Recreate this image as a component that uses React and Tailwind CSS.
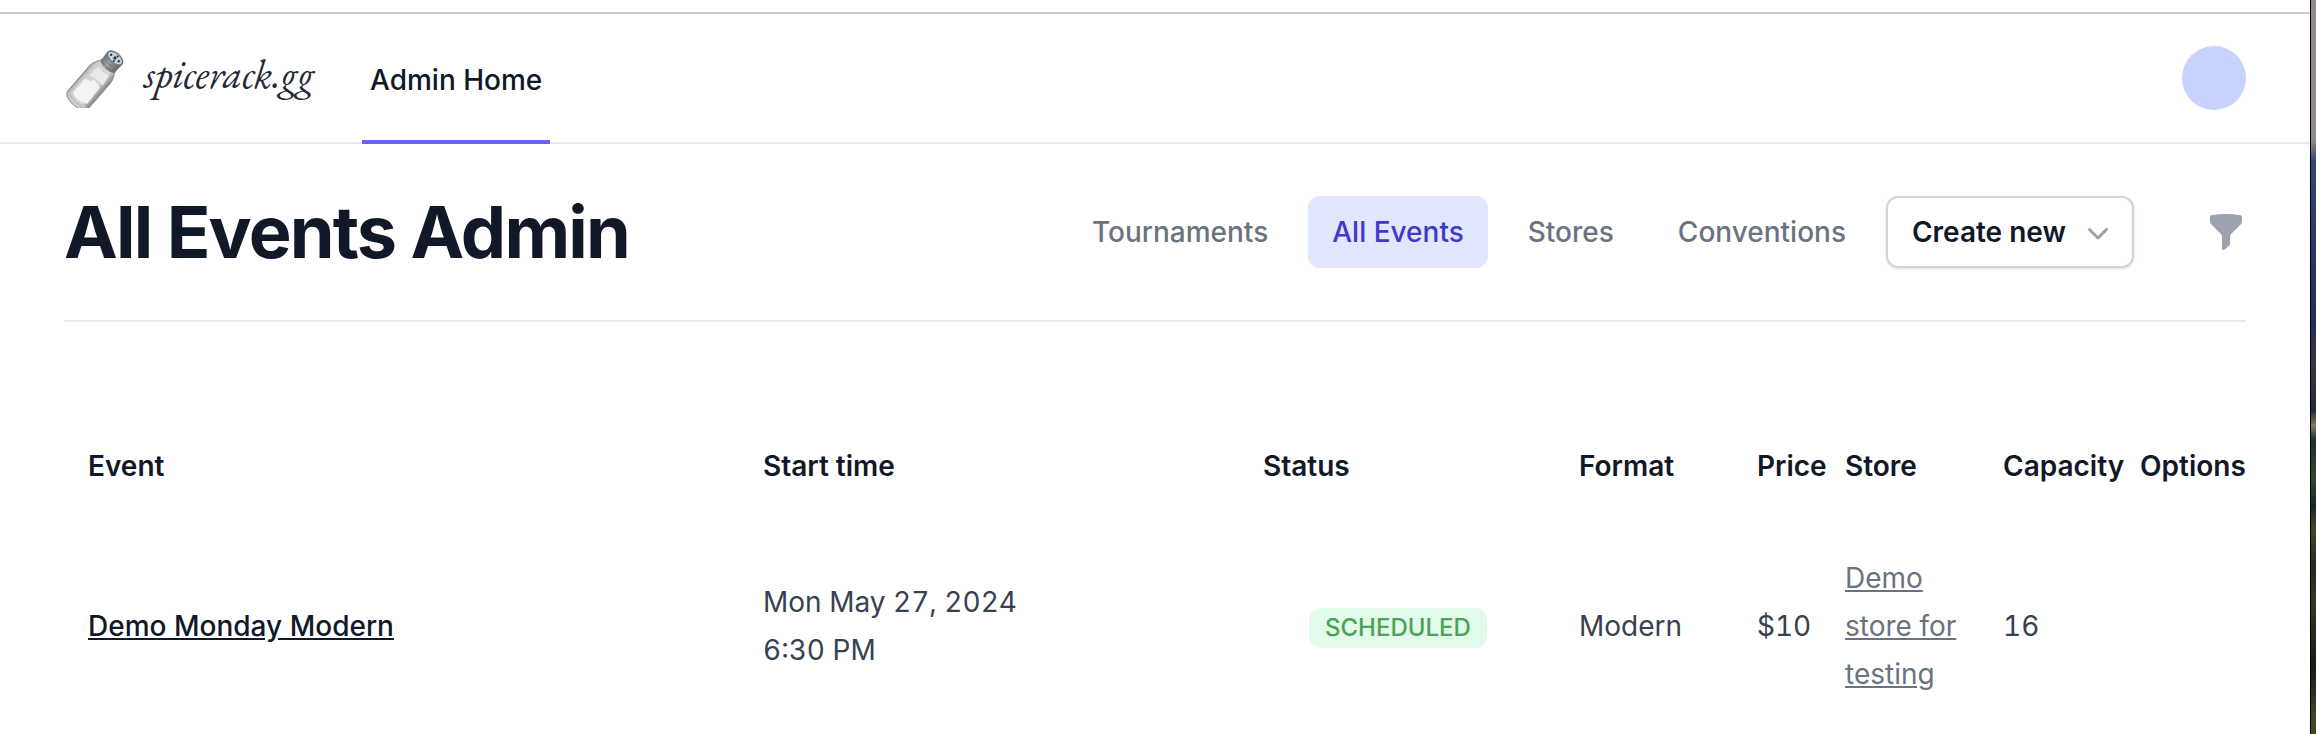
import React, { useState } from "react";
import { HiMiniChevronDown, HiMiniFunnel } from "react-icons/hi2";

const tabs = ["Tournaments", "All Events", "Stores", "Conventions"];

const columns = [
  { name: "Event", width: "" },
  { name: "Start time", width: "w-[500px]" },
  { name: "Status", width: "w-[316px]" },
  { name: "Format", width: "w-[178px]" },
  { name: "Price", width: "w-[88px]" },
  { name: "Store", width: "w-[158px]" },
  { name: "Capacity", width: "w-[137px]" },
  { name: "Options", width: "w-[106px]" },
];

const events = [
  {
    id: 1,
    name: "Demo Monday Modern",
    date: "Mon May 27, 2024",
    time: "6:30 PM",
    status: "SCHEDULED",
    format: "Modern",
    price: "$10",
    store: "Demo store for testing",
    capacity: 16,
  },
];

const SaltShaker = () => (
  <svg viewBox="0 0 60 60" className="size-[60px]" aria-hidden="true">
    <defs>
      <linearGradient id="glass" x1="0" y1="0" x2="1" y2="0">
        <stop offset="0" stopColor="#a9a8a4" />
        <stop offset="0.15" stopColor="#d0cfcd" />
        <stop offset="0.7" stopColor="#dadad9" />
        <stop offset="1" stopColor="#858583" />
      </linearGradient>
      <linearGradient id="metal" x1="0" y1="0" x2="1" y2="0">
        <stop offset="0" stopColor="#686b6e" />
        <stop offset="0.4" stopColor="#a3a6a9" />
        <stop offset="1" stopColor="#5d6062" />
      </linearGradient>
    </defs>
    <g transform="translate(51 10) rotate(41)">
      <path
        d="M-9 10 C-11 14 -14 16 -14 22 L-14 55 Q-14 59 -10 61 Q0 64 9 61 Q13 59 13 55 L13 22 C13 16 10 14 9 10 Z"
        fill="url(#glass)"
        stroke="#8f8f8c"
        strokeWidth="1"
      />
      <path d="M-9 35 L-2 33 L-2 30 L8 32 L9 53 Q0 58 -9 54 Z" fill="#f3f3f2" />
      <path d="M-7 17 Q0 20 7 17 L9 29 Q0 27 -8 30 Z" fill="#f0f0f0" opacity="0.8" />
      <path d="M-11 55 Q0 61 10 55 L10 59 Q0 62 -11 59 Z" fill="#c4c3bf" />
      <path d="M-10 0 L-9 12 Q0 17 9 12 L10 0 Z" fill="url(#metal)" />
      <path d="M-9 6 Q0 11 9 6 M-9 10 Q0 15 9 10" fill="none" stroke="#75787a" strokeWidth="1" />
      <ellipse cx="0" cy="0" rx="9" ry="5" fill="#c3d2df" stroke="#74787b" strokeWidth="1.5" />
      <g fill="#30343a">
        <circle cx="-5" cy="0" r="1.2" />
        <circle cx="0" cy="0" r="1.6" />
        <circle cx="5" cy="0" r="1.2" />
        <circle cx="1" cy="-3" r="1" />
        <circle cx="1" cy="3" r="1" />
      </g>
    </g>
  </svg>
);

const Navbar = () => (
  <nav className="mt-3 flex h-[132px] items-stretch border-y-2 border-t-[#cccccc] border-b-[#e5e7eb] px-16">
    <a href="#home" className="flex items-center gap-5">
      <SaltShaker />
      <span className="pb-2 font-['EB_Garamond','Liberation_Serif',serif] text-[40px] leading-10 text-[#1f2937] italic">
        spicerack.gg
      </span>
    </a>
    <a
      href="#admin"
      className="-mb-0.5 ml-12 flex items-center border-b-4 border-[#6366f1] px-2 pt-1.5 text-[28px] leading-10 font-medium text-[#111827]"
    >
      Admin Home
    </a>
    <button
      type="button"
      aria-label="Open user menu"
      className="ml-auto size-16 self-center rounded-full bg-[#c7d2fe]"
    />
  </nav>
);

const EventsTable = () => (
  <table className="mt-24 w-full table-fixed text-left text-[28px]">
    <thead>
      <tr className="leading-10 text-[#111827]">
        {columns.map((column) => (
          <th
            key={column.name}
            scope="col"
            className={`pt-7 pb-8 font-semibold first:pl-6 ${column.width}`}
          >
            {column.name}
          </th>
        ))}
      </tr>
    </thead>
    <tbody>
      {events.map((event) => (
        <tr key={event.id} className="leading-12 text-[#374151] tabular-nums">
          <td className="pl-6 font-medium text-[#111827]">
            <a href="#event" className="underline">
              {event.name}
            </a>
          </td>
          <td>
            {event.date}
            <br />
            {event.time}
          </td>
          <td className="pl-[46px]">
            <span className="inline-flex items-center rounded-xl bg-[#e1fae9] px-4 py-1 align-middle text-2xl font-medium text-[#4aa354]">
              {event.status}
            </span>
          </td>
          <td>{event.format}</td>
          <td>{event.price}</td>
          <td className="py-9 pr-8 text-[#6b7280]">
            <a href="#store" className="underline">
              {event.store}
            </a>
          </td>
          <td>{event.capacity}</td>
          <td></td>
        </tr>
      ))}
    </tbody>
  </table>
);

const App = () => {
  const [activeTab, setActiveTab] = useState("All Events");

  return (
    <div className="flex min-h-screen bg-white font-['Inter',sans-serif]">
      <div className="min-w-0 flex-1">
        <Navbar />
        <main className="px-16">
          <header className="flex items-center justify-between border-b-2 border-[#e5e7eb] py-12">
            <h1 className="text-7xl leading-20 font-bold tracking-tight text-[#111827]">
              All Events Admin
            </h1>
            <div className="flex items-center gap-4">
              {tabs.map((tab) => (
                <button
                  key={tab}
                  type="button"
                  onClick={() => setActiveTab(tab)}
                  className={`rounded-xl px-6 py-4 text-[28px] leading-10 font-medium ${
                    tab === activeTab
                      ? "bg-[#e0e7ff] text-[#4338ca]"
                      : "text-[#6b7280]"
                  }`}
                >
                  {tab}
                </button>
              ))}
              <button
                type="button"
                className="flex items-center gap-3 rounded-xl border-2 border-[#d1d5db] py-3.5 pr-3.5 pl-6 text-[28px] leading-10 font-semibold text-[#111827] shadow-sm"
              >
                Create new
                <HiMiniChevronDown className="size-10 text-[#9ca3af]" />
              </button>
              <button type="button" aria-label="Filters" className="ml-14 text-[#9ca3af]">
                <HiMiniFunnel className="size-10" />
              </button>
            </div>
          </header>
          <EventsTable />
        </main>
      </div>
      {/* desktop behind the window */}
      <div className="w-1.5 border-l border-black bg-[linear-gradient(to_bottom,#8f8c84_0%,#8f8c84_19%,#2d4a75_22%,#1a2f5c_44%,#3a3540_50%,#1b2b3f_56%,#8a7a50_58%,#15312c_60%,#2d4a2a_65%,#15262a_69%,#4a4520_72%,#24291a_77%,#3a3616_82%,#151b10_91%,#4a4620_98%)]" />
    </div>
  );
};

export default App;
